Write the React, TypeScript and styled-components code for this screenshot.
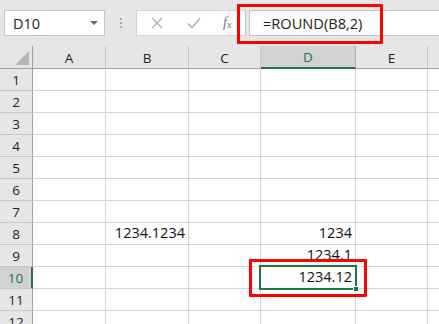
import { createGlobalStyle, styled } from 'styled-components'

const GREEN = '#217346'
const COLS = ['A', 'B', 'C', 'D', 'E', 'F']
const ROWS = [1, 2, 3, 4, 5, 6, 7, 8, 9, 10, 11, 12]

const cells: Record<string, string> = {
  B8: '1234.1234',
  D8: '1234',
  D9: '1234.1',
  D10: '1234.12',
}

const GlobalStyle = createGlobalStyle`
  * { box-sizing: border-box; }
  body {
    margin: 0;
    font-family: 'Segoe UI', 'Open Sans', 'Noto Sans', sans-serif;
    background: #fff;
  }
`

const App = () => {
  return (
    <Page>
      <GlobalStyle />
      <Toolbar>
        <NameBox>
          <NameText>D10</NameText>
          <DropArrow />
        </NameBox>
        <Grip>
          <span />
          <span />
          <span />
        </Grip>
        <ActionBox>
          <svg width="12" height="12" viewBox="0 0 12 12">
            <path d="M1 1 L11 11 M11 1 L1 11" stroke="#b3b3b3" strokeWidth="1.4" fill="none" />
          </svg>
          <svg width="14" height="12" viewBox="0 0 14 12">
            <path d="M1 6.5 L5 10.5 L13 1.5" stroke="#b3b3b3" strokeWidth="1.6" fill="none" />
          </svg>
          <Fx>
            f<sub>x</sub>
          </Fx>
        </ActionBox>
        <FormulaInput>
          <FormulaText>=ROUND(B8,2)</FormulaText>
        </FormulaInput>
        <FormulaHighlight />
      </Toolbar>
      <Sheet>
        <Corner>
          <Triangle />
        </Corner>
        {COLS.map((c) => (
          <ColHeader key={c} $active={c === 'D'}>
            {c}
          </ColHeader>
        ))}
        {ROWS.map((r) => (
          <Row key={r} r={r} />
        ))}
      </Sheet>
    </Page>
  )
}

const Row = ({ r }: { r: number }) => (
  <>
    <RowHeader $active={r === 10}>{r}</RowHeader>
    {COLS.map((c) => {
      const id = `${c}${r}`
      const selected = id === 'D10'
      return (
        <Cell key={id}>
          {cells[id]}
          {selected && (
            <>
              <Selection>
                <FillHandle />
              </Selection>
              <CellHighlight />
            </>
          )}
        </Cell>
      )
    })}
  </>
)

export default App

const Page = styled.div`
  width: 439px;
  height: 324px;
  overflow: hidden;
  background: #e6e6e6;
`

const Toolbar = styled.div`
  position: relative;
  display: flex;
  align-items: flex-start;
  height: 46px;
  padding: 10px 0 0 4px;
  background: #e6e6e6;

  & > * {
    flex-shrink: 0;
  }
`

const NameBox = styled.div`
  display: flex;
  align-items: center;
  justify-content: space-between;
  width: 101px;
  height: 26px;
  padding: 0 6px 0 8px;
  background: #fff;
  border: 1px solid #c6c6c6;
`

const NameText = styled.span`
  font-size: 14.5px;
  color: #222;
`

const DropArrow = styled.span`
  width: 0;
  height: 0;
  border-left: 4px solid transparent;
  border-right: 4px solid transparent;
  border-top: 4px solid #6b6b6b;
`

const Grip = styled.div`
  display: flex;
  flex-direction: column;
  align-items: center;
  gap: 2px;
  width: 31px;
  padding-top: 8px;

  span {
    width: 2px;
    height: 2px;
    background: #a6a6a6;
  }
`

const ActionBox = styled.div`
  display: flex;
  align-items: center;
  gap: 24px;
  width: 110px;
  height: 26px;
  padding-left: 14px;
  background: #fff;
  border: 1px solid #d4d4d4;
  border-right: 1px solid #c6c6c6;
`

const Fx = styled.span`
  margin-left: -2px;
  font-family: 'Liberation Serif', serif;
  font-style: italic;
  font-size: 14px;
  color: #777;

  sub {
    font-size: 10px;
    vertical-align: -1px;
  }
`

const FormulaInput = styled.div`
  display: flex;
  align-items: center;
  flex: 1 1 auto;
  height: 26px;
  margin-left: 3px;
  padding-left: 13px;
  background: #fff;
  border: 1px solid #c6c6c6;
  border-right: none;
`

const FormulaText = styled.span`
  font-size: 14.6px;
  color: #222;
`

const FormulaHighlight = styled.div`
  position: absolute;
  left: 237px;
  top: 4px;
  width: 146px;
  height: 40px;
  border: 3px solid #ff0000;
  border-radius: 1px;
`

const Sheet = styled.div`
  display: grid;
  grid-template-columns: 33px 73px 83px 72px 95px 72px 72px;
  grid-template-rows: 23px repeat(12, 22px);
  background: #fff;
`

const Corner = styled.div`
  position: relative;
  background: #e6e6e6;
  border-right: 1px solid #9f9f9f;
  border-bottom: 1px solid #9f9f9f;
`

const Triangle = styled.div`
  position: absolute;
  right: 3px;
  bottom: 3px;
  width: 0;
  height: 0;
  border-left: 14px solid transparent;
  border-bottom: 14px solid #b5b5b5;
`

const ColHeader = styled.div<{ $active: boolean }>`
  display: flex;
  align-items: center;
  justify-content: center;
  padding-top: 1px;
  font-size: 13.5px;
  color: ${(p) => (p.$active ? GREEN : '#1e1e1e')};
  background: ${(p) => (p.$active ? '#d2d2d2' : '#e6e6e6')};
  border-right: 1px solid ${(p) => (p.$active ? '#ababab' : '#c6c6c6')};
  border-bottom: ${(p) => (p.$active ? `2px solid ${GREEN}` : '1px solid #9f9f9f')};
`

const RowHeader = styled.div<{ $active: boolean }>`
  display: flex;
  align-items: center;
  justify-content: center;
  font-size: 13.5px;
  color: ${(p) => (p.$active ? GREEN : '#1e1e1e')};
  background: ${(p) => (p.$active ? '#d2d2d2' : '#e6e6e6')};
  border-right: ${(p) => (p.$active ? `2px solid ${GREEN}` : '1px solid #9f9f9f')};
  border-bottom: 1px solid #c6c6c6;
`

const Cell = styled.div`
  position: relative;
  display: flex;
  align-items: flex-end;
  justify-content: flex-end;
  padding: 0 3px 2px 0;
  font-size: 14.5px;
  line-height: 18px;
  color: #111;
  white-space: nowrap;
  border-right: 1px solid #d4d4d4;
  border-bottom: 1px solid #d4d4d4;
`

const Selection = styled.div`
  position: absolute;
  left: -2px;
  top: -2px;
  right: -2px;
  bottom: -2px;
  border: 2px solid ${GREEN};
  z-index: 2;
`

const FillHandle = styled.div`
  position: absolute;
  right: -4px;
  bottom: -4px;
  width: 6px;
  height: 6px;
  background: ${GREEN};
  border: 1px solid #fff;
`

const CellHighlight = styled.div`
  position: absolute;
  left: -12px;
  top: -8px;
  right: -12px;
  bottom: -9px;
  border: 3px solid #ff0000;
  border-radius: 1px;
  z-index: 3;
`
